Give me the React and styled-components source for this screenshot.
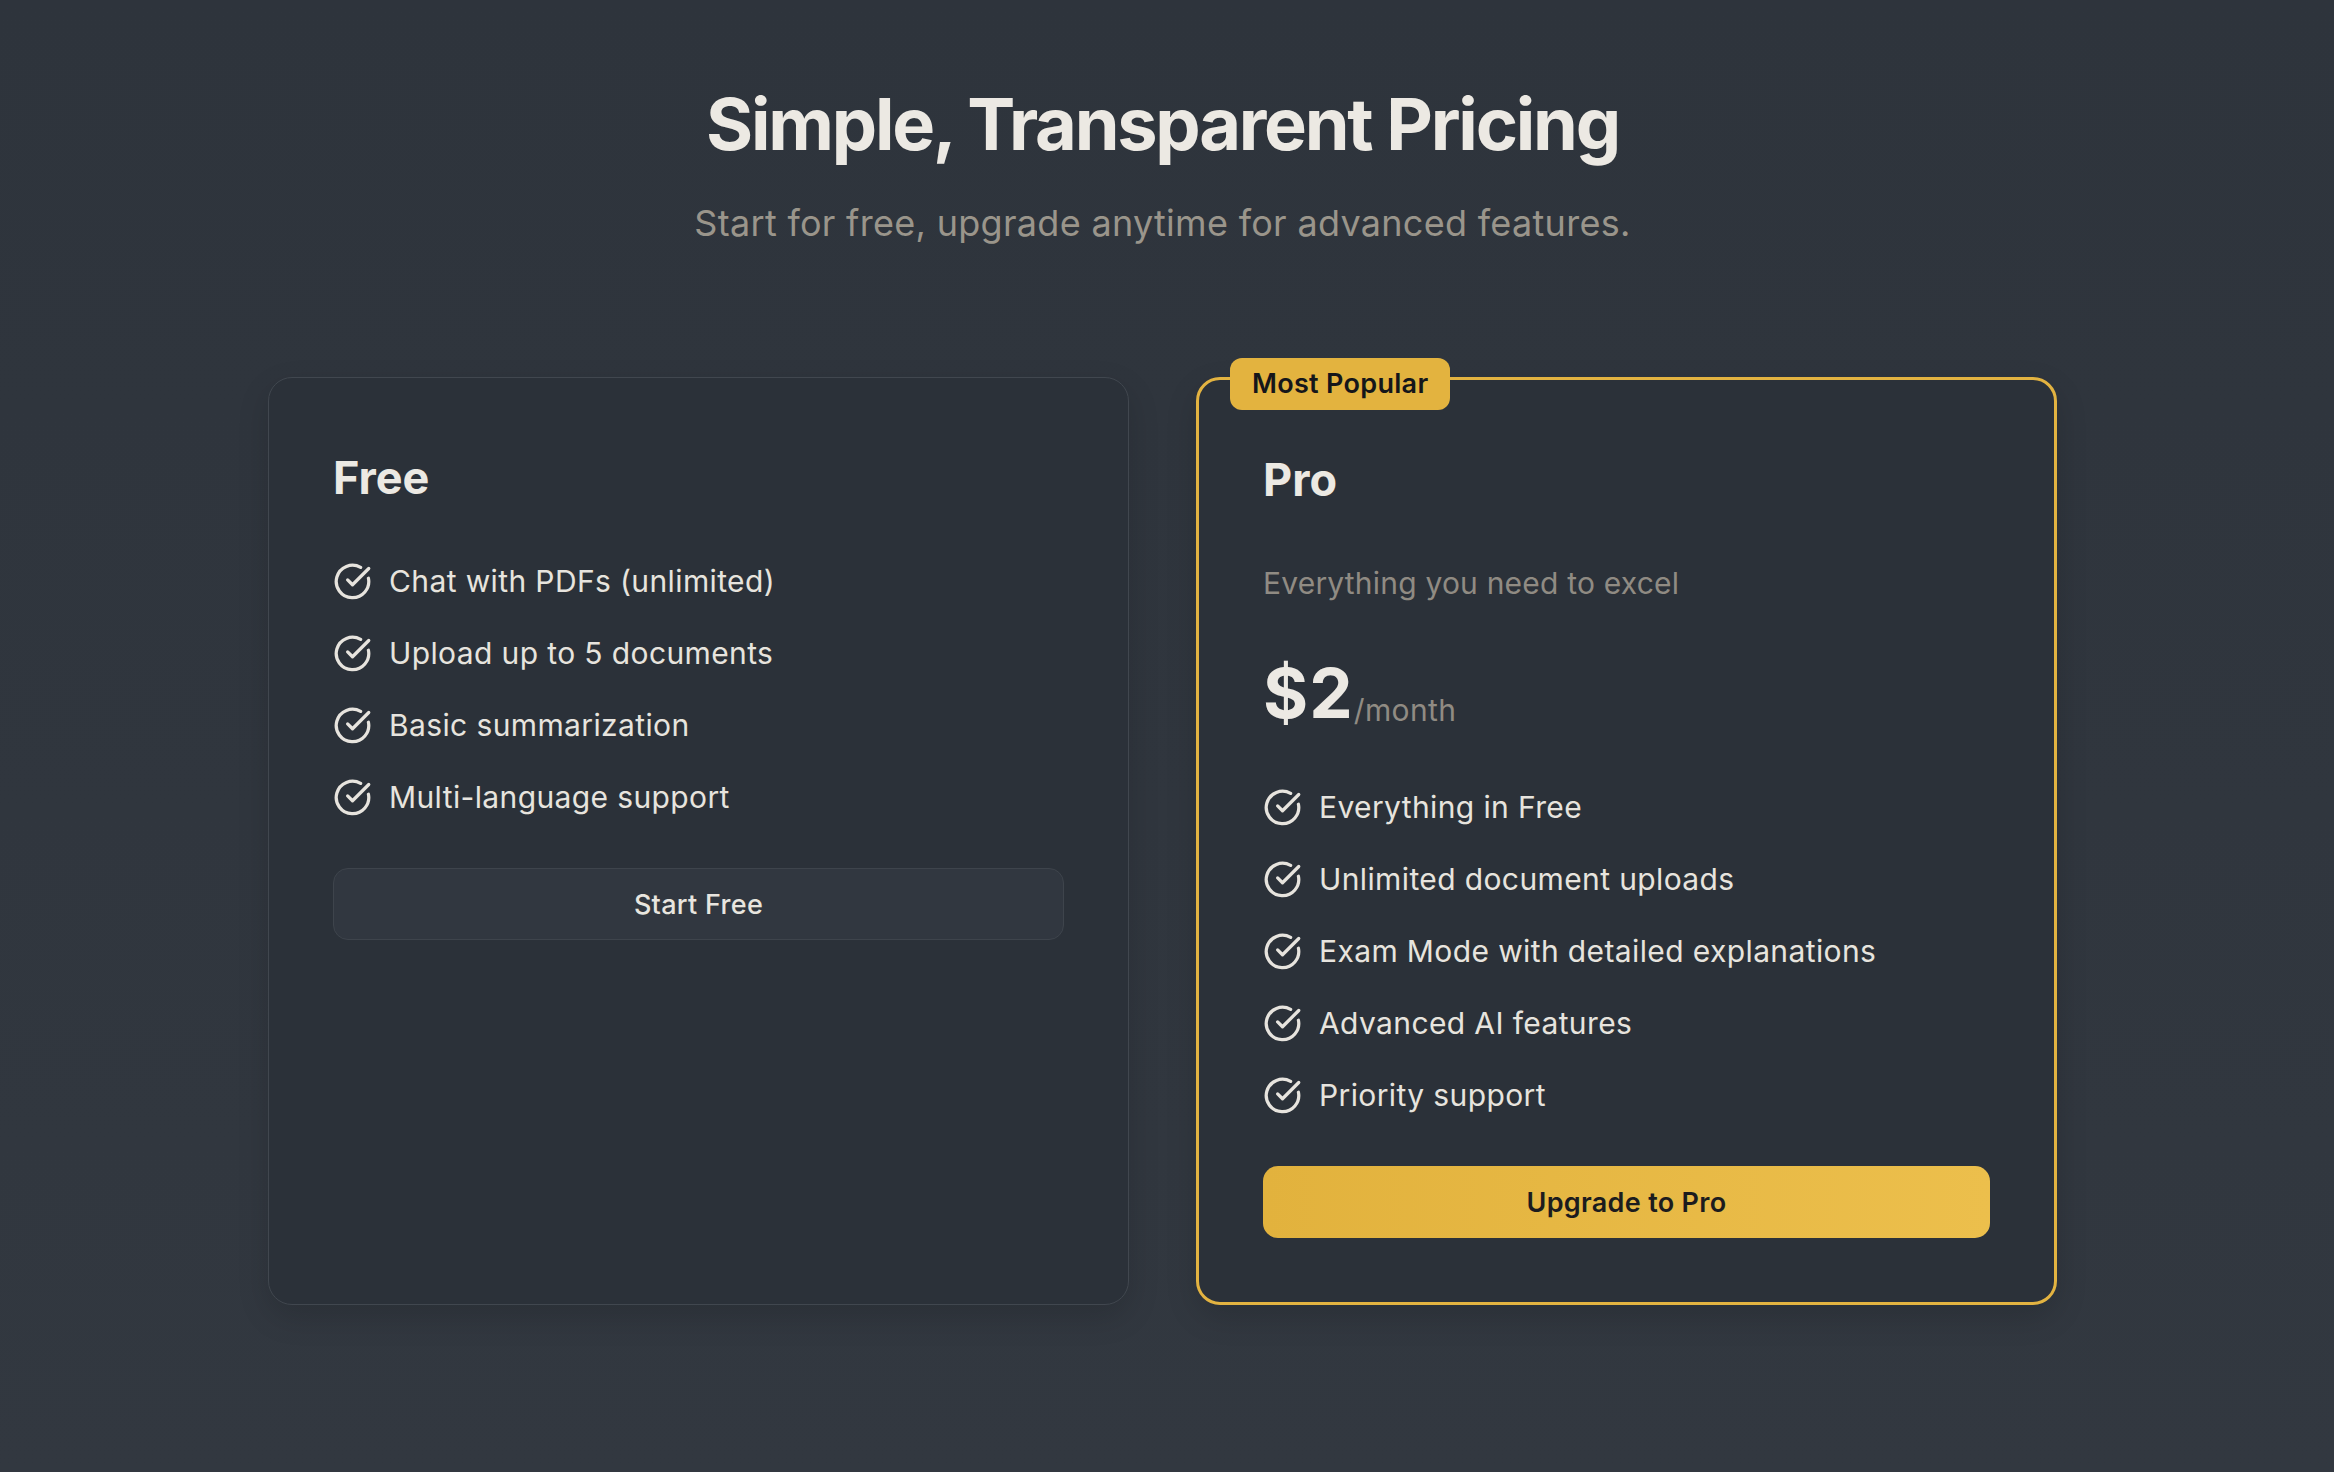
import React from "react";
import styled, { createGlobalStyle, css } from "styled-components";

const GlobalStyle = createGlobalStyle`
  html, body {
    margin: 0;
    padding: 0;
  }
  body {
    background: #2f353d;
    font-family: Inter, "Noto Sans", "Liberation Sans", sans-serif;
    -webkit-font-smoothing: antialiased;
  }
  * { box-sizing: border-box; }
`;

const Page = styled.main`
  min-height: 100vh;
  padding: 81px 9px 80px 0;
  display: flex;
  flex-direction: column;
  align-items: center;
  background: linear-gradient(180deg, #2e343c 0%, #30363e 55%, #323840 100%);
`;

const Title = styled.h1`
  margin: 0;
  font-size: 72px;
  line-height: 86px;
  font-weight: 700;
  letter-spacing: -0.031em;
  color: #ece9e3;
  text-align: center;
`;

const Subtitle = styled.p`
  margin: 29px 0 0;
  font-size: 36px;
  line-height: 54px;
  font-weight: 400;
  letter-spacing: 0.3px;
  color: #9a958b;
  text-align: center;
`;

const Grid = styled.section`
  margin-top: 127px;
  width: 100%;
  max-width: 1789px;
  display: grid;
  grid-template-columns: 1fr 1fr;
  gap: 67px;
`;

const Card = styled.article`
  position: relative;
  display: flex;
  flex-direction: column;
  padding: 64px;
  border-radius: 24px;
  background: #2b3139;
  border: 1px solid #41474f;
  box-shadow: 0 12px 32px rgba(0, 0, 0, 0.14);
  ${(p) =>
    p.$featured &&
    css`
      border: 3px solid #e3b341;
    `}
`;

const Badge = styled.span`
  position: absolute;
  top: -22px;
  left: 31px;
  padding: 6px 22px;
  border-radius: 12px;
  background: #e3b33f;
  color: #15161a;
  font-size: 27px;
  line-height: 40px;
  font-weight: 600;
  letter-spacing: 0.3px;
`;

const PlanName = styled.h2`
  margin: 0 0 43px;
  font-size: 45px;
  line-height: 72px;
  font-weight: 700;
  color: #ece9e3;
`;

const Description = styled.p`
  margin: 0 0 53px;
  font-size: 30px;
  line-height: 48px;
  letter-spacing: 0.2px;
  color: #908b83;
`;

const Price = styled.div`
  display: flex;
  align-items: flex-end;
  margin-bottom: 56px;
`;

const Amount = styled.span`
  font-size: 69px;
  line-height: 67px;
  font-weight: 700;
  letter-spacing: 0.015em;
  color: #ece9e3;
`;

const Period = styled.span`
  font-size: 30px;
  line-height: 33px;
  letter-spacing: 0.4px;
  color: #908b83;
`;

const FeatureList = styled.ul`
  list-style: none;
  margin: 0;
  padding: 0;
  display: flex;
  flex-direction: column;
  gap: 24px;
`;

const Feature = styled.li`
  display: flex;
  align-items: center;
  gap: 17px;
  min-height: 48px;
  font-size: 30px;
  line-height: 48px;
  letter-spacing: 0.38px;
  color: #e7e4de;

  svg {
    flex: none;
  }
`;

const Button = styled.button`
  margin-top: 47px;
  width: 100%;
  height: 72px;
  border-radius: 15px;
  font-family: inherit;
  font-size: 27px;
  letter-spacing: 0.3px;
  cursor: pointer;
  ${(p) =>
    p.$primary
      ? css`
          border: none;
          background: linear-gradient(90deg, #e2b23d 0%, #ecbf4c 100%);
          color: #1c1c1e;
          font-weight: 600;
        `
      : css`
          border: 1px solid #3e444c;
          background: #313740;
          color: #e8e5df;
          font-weight: 500;
        `}
`;

const CheckIcon = () => (
  <svg
    width="39"
    height="39"
    viewBox="0 0 24 24"
    fill="none"
    stroke="#e7e4de"
    strokeWidth="2"
    strokeLinecap="round"
    strokeLinejoin="round"
  >
    <path d="M21.801 10A10 10 0 1 1 17 3.335" />
    <path d="m9 11 3 3L22 4" />
  </svg>
);

const plans = [
  {
    name: "Free",
    features: [
      "Chat with PDFs (unlimited)",
      "Upload up to 5 documents",
      "Basic summarization",
      "Multi-language support",
    ],
    cta: "Start Free",
  },
  {
    name: "Pro",
    featured: true,
    description: "Everything you need to excel",
    price: "$2",
    period: "/month",
    features: [
      "Everything in Free",
      "Unlimited document uploads",
      "Exam Mode with detailed explanations",
      "Advanced AI features",
      "Priority support",
    ],
    cta: "Upgrade to Pro",
  },
];

export default function App() {
  return (
    <>
      <GlobalStyle />
      <Page>
        <Title>Simple, Transparent Pricing</Title>
        <Subtitle>Start for free, upgrade anytime for advanced features.</Subtitle>
        <Grid>
          {plans.map((plan) => (
            <Card key={plan.name} $featured={plan.featured}>
              {plan.featured && <Badge>Most Popular</Badge>}
              <PlanName>{plan.name}</PlanName>
              {plan.description && <Description>{plan.description}</Description>}
              {plan.price && (
                <Price>
                  <Amount>{plan.price}</Amount>
                  <Period>{plan.period}</Period>
                </Price>
              )}
              <FeatureList>
                {plan.features.map((f) => (
                  <Feature key={f}>
                    <CheckIcon />
                    <span>{f}</span>
                  </Feature>
                ))}
              </FeatureList>
              <Button $primary={plan.featured}>{plan.cta}</Button>
            </Card>
          ))}
        </Grid>
      </Page>
    </>
  );
}
